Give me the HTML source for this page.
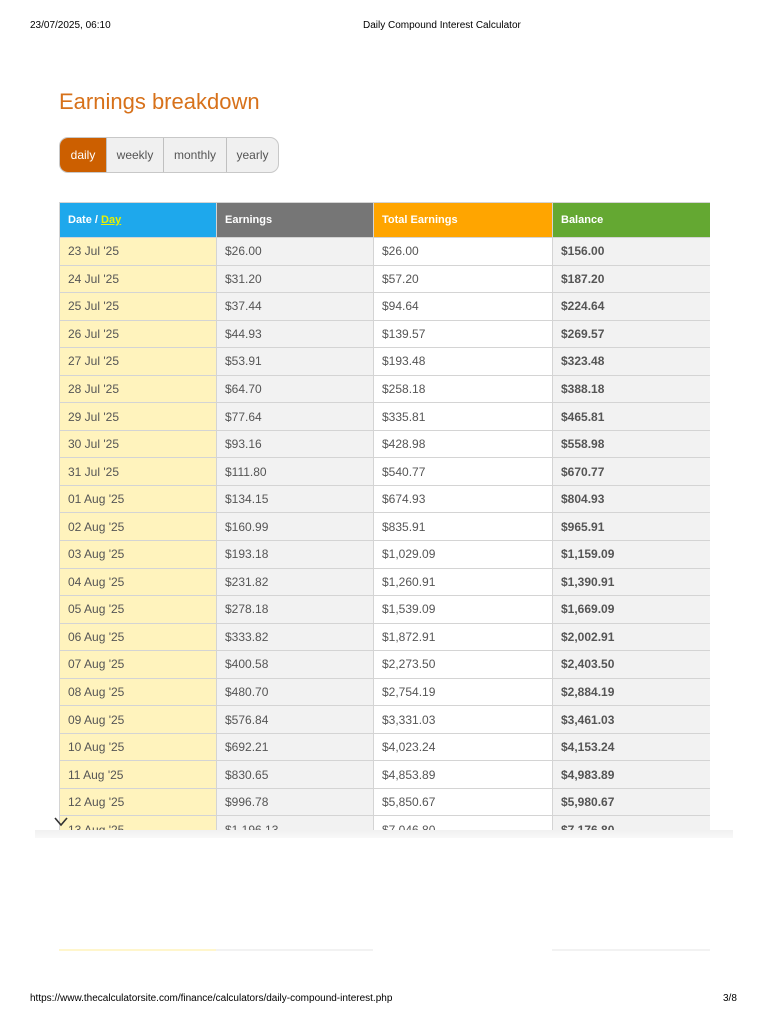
<!DOCTYPE html>
<html><head><meta charset="utf-8"><style>
*{margin:0;padding:0;box-sizing:border-box}
body{width:768px;height:1024px;position:relative;background:#fff;font-family:"Liberation Sans",Arial,sans-serif;overflow:hidden}
.hd{position:absolute;top:20px;font-size:10px;color:#000}
h1{position:absolute;left:59px;top:89px;font-size:22px;font-weight:normal;color:#d7711a}
.tabs{position:absolute;left:59px;top:137px;height:36px;display:flex;border:1px solid #c8c8c8;border-radius:9px;overflow:hidden;background:#f0f0f0}
.tabs div{font-size:12px;color:#555;line-height:34px;text-align:center;border-left:1px solid #c0c0c0}
.tabs div.on{background:#cc5f00;color:#fff;border-left:none}
.wrap{position:absolute;left:59px;top:202px;width:651px;height:628px;overflow:hidden}
table{border-collapse:collapse;table-layout:fixed;width:651px}
td,th{border:1px solid #d4d4d4;font-size:12px;color:#555;text-align:left;padding-left:8px;height:27.55px;font-weight:normal}
th{height:35px;color:#fff;font-weight:bold;font-size:11px}
td:nth-child(1){background:#fff3bd}
td:nth-child(2){background:#f2f2f2}
td:nth-child(3){background:#fff}
td:nth-child(4){background:#f2f2f2;font-weight:bold}
.band{position:absolute;left:35px;top:830px;width:698px;height:8px;background:linear-gradient(#f0f0f0,#f8f8f8)}
</style></head><body>
<div class="hd" style="left:30px">23/07/2025, 06:10</div>
<div class="hd" style="left:363px">Daily Compound Interest Calculator</div>
<h1>Earnings breakdown</h1>
<div class="tabs"><div class="on" style="width:46px">daily</div><div style="width:57px">weekly</div><div style="width:63px">monthly</div><div style="width:52px">yearly</div></div>
<div class="wrap"><table>
<colgroup><col style="width:157px"><col style="width:157px"><col style="width:179px"><col style="width:158px"></colgroup>
<tr><th style="background:#1ea8ec">Date / <u style="color:#e8f000">Day</u></th><th style="background:#767676">Earnings</th><th style="background:#ffa500">Total Earnings</th><th style="background:#64a832">Balance</th></tr>
<tr><td>23 Jul '25</td><td>$26.00</td><td>$26.00</td><td>$156.00</td></tr>
<tr><td>24 Jul '25</td><td>$31.20</td><td>$57.20</td><td>$187.20</td></tr>
<tr><td>25 Jul '25</td><td>$37.44</td><td>$94.64</td><td>$224.64</td></tr>
<tr><td>26 Jul '25</td><td>$44.93</td><td>$139.57</td><td>$269.57</td></tr>
<tr><td>27 Jul '25</td><td>$53.91</td><td>$193.48</td><td>$323.48</td></tr>
<tr><td>28 Jul '25</td><td>$64.70</td><td>$258.18</td><td>$388.18</td></tr>
<tr><td>29 Jul '25</td><td>$77.64</td><td>$335.81</td><td>$465.81</td></tr>
<tr><td>30 Jul '25</td><td>$93.16</td><td>$428.98</td><td>$558.98</td></tr>
<tr><td>31 Jul '25</td><td>$111.80</td><td>$540.77</td><td>$670.77</td></tr>
<tr><td>01 Aug '25</td><td>$134.15</td><td>$674.93</td><td>$804.93</td></tr>
<tr><td>02 Aug '25</td><td>$160.99</td><td>$835.91</td><td>$965.91</td></tr>
<tr><td>03 Aug '25</td><td>$193.18</td><td>$1,029.09</td><td>$1,159.09</td></tr>
<tr><td>04 Aug '25</td><td>$231.82</td><td>$1,260.91</td><td>$1,390.91</td></tr>
<tr><td>05 Aug '25</td><td>$278.18</td><td>$1,539.09</td><td>$1,669.09</td></tr>
<tr><td>06 Aug '25</td><td>$333.82</td><td>$1,872.91</td><td>$2,002.91</td></tr>
<tr><td>07 Aug '25</td><td>$400.58</td><td>$2,273.50</td><td>$2,403.50</td></tr>
<tr><td>08 Aug '25</td><td>$480.70</td><td>$2,754.19</td><td>$2,884.19</td></tr>
<tr><td>09 Aug '25</td><td>$576.84</td><td>$3,331.03</td><td>$3,461.03</td></tr>
<tr><td>10 Aug '25</td><td>$692.21</td><td>$4,023.24</td><td>$4,153.24</td></tr>
<tr><td>11 Aug '25</td><td>$830.65</td><td>$4,853.89</td><td>$4,983.89</td></tr>
<tr><td>12 Aug '25</td><td>$996.78</td><td>$5,850.67</td><td>$5,980.67</td></tr>
<tr><td>13 Aug '25</td><td>$1,196.13</td><td>$7,046.80</td><td>$7,176.80</td></tr>
</table></div>
<div class="band"></div>
<svg style="position:absolute;left:54px;top:817px" width="14" height="10"><path d="M1 1 L7 8 L13 1" fill="none" stroke="#333" stroke-width="1.6"/></svg>
<div style="position:absolute;left:59px;top:949px;width:157px;height:2px;background:#fff6cc"></div>
<div style="position:absolute;left:216px;top:949px;width:157px;height:2px;background:#f2f2f2"></div>
<div style="position:absolute;left:552px;top:949px;width:158px;height:2px;background:#f2f2f2"></div>
<div class="hd" style="left:30px;top:993px">https://www.thecalculatorsite.com/finance/calculators/daily-compound-interest.php</div>
<div class="hd" style="left:723px;top:993px">3/8</div>
</body></html>
